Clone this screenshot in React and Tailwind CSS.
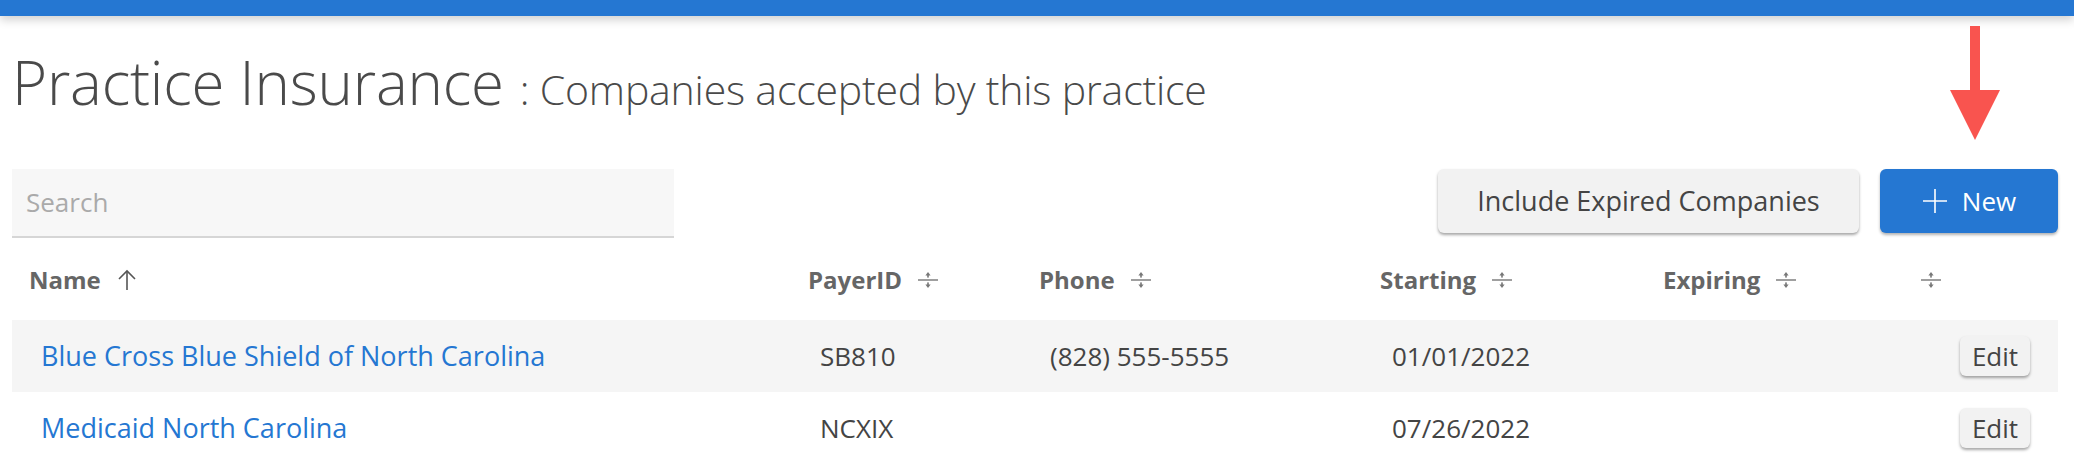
import React from 'react';

function SortIcon() {
  return (
    <svg width="20" height="20" viewBox="0 0 20 20" className="inline-block text-[#777]">
      <path d="M10 2 L7.4 5.4 L12.6 5.4 Z" fill="currentColor" />
      <rect x="9.2" y="5" width="1.6" height="2.6" fill="currentColor" />
      <rect x="0" y="9.3" width="20" height="1.4" fill="currentColor" />
      <rect x="9.2" y="12.4" width="1.6" height="2.6" fill="currentColor" />
      <path d="M10 18 L7.4 14.6 L12.6 14.6 Z" fill="currentColor" />
    </svg>
  );
}

function ArrowUpIcon() {
  return (
    <svg width="20" height="22" viewBox="0 0 20 22" fill="none" stroke="#555" strokeWidth="1.6" className="inline-block">
      <path d="M10 21 V2" />
      <path d="M2 10 L10 2 L18 10" />
    </svg>
  );
}

const rows = [
  { name: 'Blue Cross Blue Shield of North Carolina', payer: 'SB810', phone: '(828) 555-5555', start: '01/01/2022', exp: '' },
  { name: 'Medicaid North Carolina', payer: 'NCXIX', phone: '', start: '07/26/2022', exp: '' },
];

const cols = ['w-[779px]', 'w-[231px]', 'w-[341px]', 'w-[283px]', 'w-[258px]'];

export default function App() {
  return (
    <div className="min-h-screen bg-white font-['Open_Sans',sans-serif] text-[#444]">
      {/* Top bar */}
      <div className="h-4 bg-[#2577d2] shadow-[0_4px_10px_rgba(0,0,0,0.18)]" />

      <div className="relative px-3">
        {/* Annotation arrow */}
        <svg width="50" height="116" viewBox="0 0 50 116" className="absolute left-[1950px] top-[10px]">
          <rect x="20" y="0" width="10" height="66" fill="#f9544f" />
          <path d="M0 64 L50 64 L25 114 Z" fill="#f9544f" />
        </svg>

        {/* Title */}
        <div className="flex items-baseline pt-[30px] h-[153px]">
          <h1 className="text-[60px] font-[330] leading-[72px] text-[#4a4a4a] tracking-[-0.2px]">Practice Insurance</h1>
          <span className="ml-[16px] text-[41px] font-[330] text-[#4a4a4a] tracking-[-0.2px]">: Companies accepted by this practice</span>
        </div>

        {/* Controls */}
        <div className="flex items-start justify-between">
          <div className="w-[662px] h-[69px] bg-[#f7f7f7] border-b-2 border-[#d6d6d6] flex items-center px-[14px]">
            <span className="text-[26px] text-[#aaa]">Search</span>
          </div>
          <div className="flex gap-[21px] pr-[4px]">
            <button className="w-[421px] h-[64px] rounded-md bg-[#f2f2f2] shadow-[0_2px_3px_rgba(0,0,0,0.35)] text-[27px] text-[#444]">
              Include Expired Companies
            </button>
            <button className="w-[178px] h-[64px] rounded-md bg-[#2577d2] shadow-[0_2px_3px_rgba(0,0,0,0.3)] text-[26px] text-white flex items-center justify-center gap-[14px]">
              <svg width="26" height="26" viewBox="0 0 26 26" stroke="white" strokeWidth="1.6">
                <path d="M13 1 V25 M1 13 H25" />
              </svg>
              New
            </button>
          </div>
        </div>

        {/* Table */}
        <div className="w-[2046px] mt-[1px]">
          <div className="flex items-center h-[81px] text-[24px] font-bold text-[#666]">
            <div className={`${cols[0]} pl-[17px] flex items-center gap-[16px]`}>
              Name <ArrowUpIcon />
            </div>
            <div className={`${cols[1]} pl-[17px] flex items-center gap-[16px]`}>
              PayerID <SortIcon />
            </div>
            <div className={`${cols[2]} pl-[17px] flex items-center gap-[16px]`}>
              Phone <SortIcon />
            </div>
            <div className={`${cols[3]} pl-[17px] flex items-center gap-[16px]`}>
              Starting <SortIcon />
            </div>
            <div className={`${cols[4]} pl-[17px] flex items-center gap-[16px]`}>
              Expiring <SortIcon />
            </div>
            <div className="flex-1 pl-[17px] flex items-center">
              <SortIcon />
            </div>
          </div>

          {rows.map((r, i) => (
            <div key={i} className={`flex items-center h-[72px] text-[26px] ${i % 2 === 0 ? 'bg-[#f5f5f5]' : 'bg-white'}`}>
              <div className={`${cols[0]} pl-[29px] text-[27px] text-[#2577d2]`}>{r.name}</div>
              <div className={`${cols[1]} pl-[29px]`}>{r.payer}</div>
              <div className={`${cols[2]} pl-[28px]`}>{r.phone}</div>
              <div className={`${cols[3]} pl-[29px]`}>{r.start}</div>
              <div className={`${cols[4]} pl-[29px]`}>{r.exp}</div>
              <div className="flex-1 flex justify-end pr-[28px]">
                <button className="w-[70px] h-[40px] rounded-md bg-[#f2f2f2] shadow-[0_2px_3px_rgba(0,0,0,0.35)] text-[26px] leading-none text-[#444]">
                  Edit
                </button>
              </div>
            </div>
          ))}
        </div>
      </div>
    </div>
  );
}
